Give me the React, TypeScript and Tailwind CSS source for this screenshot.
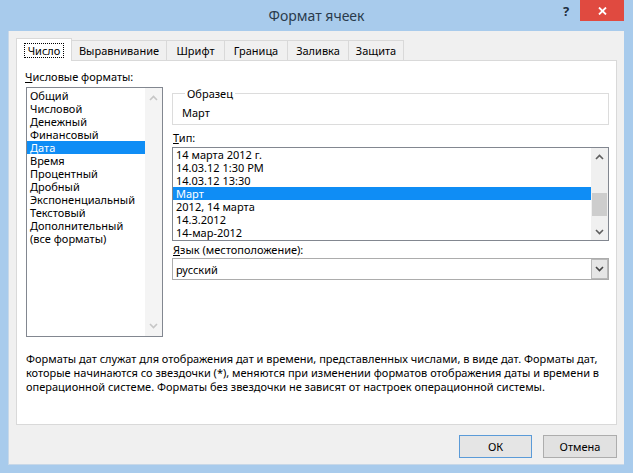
import React from "react";

const ChevUp = ({ c = "#5f5f5f" }: { c?: string }) => (
  <svg width="9" height="6" viewBox="0 0 9 6">
    <path d="M1 5 L4.5 1.5 L8 5" fill="none" stroke={c} strokeWidth="1.6" />
  </svg>
);
const ChevDown = ({ c = "#5f5f5f" }: { c?: string }) => (
  <svg width="9" height="6" viewBox="0 0 9 6">
    <path d="M1 1 L4.5 4.5 L8 1" fill="none" stroke={c} strokeWidth="1.6" />
  </svg>
);

const formats = [
  "Общий",
  "Числовой",
  "Денежный",
  "Финансовый",
  "Дата",
  "Время",
  "Процентный",
  "Дробный",
  "Экспоненциальный",
  "Текстовый",
  "Дополнительный",
  "(все форматы)",
];

const types = [
  "14 марта 2012 г.",
  "14.03.12 1:30 PM",
  "14.03.12 13:30",
  "Март",
  "2012, 14 марта",
  "14.3.2012",
  "14-мар-2012",
];

const tabs = [
  { t: "Число", w: "w-[56px]" },
  { t: "Выравнивание", w: "w-[96px]" },
  { t: "Шрифт", w: "w-[59px]" },
  { t: "Граница", w: "w-[64px]" },
  { t: "Заливка", w: "w-[62px]" },
  { t: "Защита", w: "w-[56px]" },
];

export default function App() {
  return (
    <div className="w-[633px] h-[473px] bg-[#a8cbec] flex flex-col font-['Noto_Sans',sans-serif] text-[11px] text-black overflow-hidden">
      {/* title bar */}
      <div className="relative h-[31px] shrink-0 flex items-center justify-center">
        <span className="text-[14px] text-[#2a3b4c] leading-none mt-[1px]">Формат ячеек</span>
        <span className="absolute left-[563px] top-[5px] text-[13px] font-bold text-[#1f2f3f] leading-none">?</span>
        <div className="absolute left-[580px] top-0 w-[44px] h-[21px] bg-[#e04a40] flex items-center justify-center">
          <svg width="9" height="8" viewBox="0 0 9 8">
            <path d="M1 0.5 L8 7.5 M8 0.5 L1 7.5" stroke="#fff" strokeWidth="1.8" />
          </svg>
        </div>
      </div>

      {/* client */}
      <div className="ml-[8px] w-[616px] h-[434px] bg-[#f0f0f0] flex flex-col border-l border-b border-[#c8d8e8]">
        {/* tabs */}
        <div className="h-[29px] pl-[7px] flex items-end">
          {tabs.map((tb, i) =>
            i === 0 ? (
              <div
                key={tb.t}
                className={`${tb.w} h-[23px] -mb-px relative z-10 bg-white border border-b-0 border-[#d9d9d9] flex items-center justify-center`}
              >
                <span className="border border-dotted border-black px-[3px] leading-[13px]">{tb.t}</span>
              </div>
            ) : (
              <div
                key={tb.t}
                className={`${tb.w} h-[20px] -ml-px bg-[#f0f0f0] border border-b-0 border-[#d9d9d9] flex items-center justify-center leading-none`}
              >
                {tb.t}
              </div>
            )
          )}
        </div>

        {/* panel */}
        <div className="ml-[7px] w-[601px] h-[365px] bg-white border border-[#d9d9d9] pl-[9px] pt-[9px] flex flex-col">
          <div className="flex">
            {/* left column */}
            <div className="w-[137px] flex flex-col">
              <div className="h-[13px] leading-[13px] -ml-px">
                <span className="underline">Ч</span>исловые форматы:
              </div>
              <div className="mt-[4px] h-[250px] border border-[#828790] flex">
                <div className="w-[118px] flex flex-col pt-px">
                  {formats.map((f) => (
                    <div
                      key={f}
                      className={`h-[13px] leading-[13px] pl-[3px] whitespace-nowrap ${
                        f === "Дата" ? "bg-[#0f8df5] text-white" : ""
                      }`}
                    >
                      {f}
                    </div>
                  ))}
                </div>
                <div className="w-[17px] bg-[#f4f4f4] flex flex-col justify-between items-center py-[7px]">
                  <ChevUp c="#c6c6c6" />
                  <ChevDown c="#c6c6c6" />
                </div>
              </div>
            </div>

            {/* right column */}
            <div className="ml-[9px] mt-[17px] w-[437px] flex flex-col">
              <fieldset className="border border-[#dcdcdc] pl-[9px] pb-[4px] h-[38px]">
                <legend className="px-[2px] ml-[3px] leading-[13px]">Образец</legend>
                <div className="leading-[13px] mt-[6px]">Март</div>
              </fieldset>
              <div className="mt-[6px] h-[13px] leading-[13px] pl-px">
                <span className="underline">Т</span>ип:
              </div>
              <div className="mt-[3px] h-[94px] border border-[#828790] flex">
                <div className="w-[418px] flex flex-col">
                  {types.map((t) => (
                    <div
                      key={t}
                      className={`h-[13px] leading-[13px] pl-[3px] whitespace-nowrap ${
                        t === "Март" ? "bg-[#0f8df5] text-white" : ""
                      }`}
                    >
                      {t}
                    </div>
                  ))}
                </div>
                <div className="w-[17px] bg-[#f0f0f0] flex flex-col items-center">
                  <div className="h-[17px] flex items-center justify-center">
                    <ChevUp />
                  </div>
                  <div className="flex-1 w-full flex flex-col justify-center">
                    <div className="h-[23px] mt-[21px] mx-px bg-[#cdcdcd]" />
                  </div>
                  <div className="h-[17px] flex items-center justify-center">
                    <ChevDown />
                  </div>
                </div>
              </div>
              <div className="mt-[2px] h-[13px] leading-[13px] pl-px">
                <span className="underline">Я</span>зык (местоположение):
              </div>
              <div className="mt-[2px] h-[22px] border border-[#acacac] flex items-center justify-between">
                <span className="pl-[3px] leading-[13px]">русский</span>
                <div className="w-[17px] h-[20px] bg-[#e6e6e6] border border-[#b9b9b9] flex items-center justify-center">
                  <ChevDown c="#444" />
                </div>
              </div>
            </div>
          </div>

          <div className="mt-[15px] leading-[14px] whitespace-nowrap">
            Форматы дат служат для отображения дат и времени, представленных числами, в виде дат. Форматы дат,
            <br />
            которые начинаются со звездочки (*), меняются при изменении форматов отображения даты и времени в
            <br />
            операционной системе. Форматы без звездочки не зависят от настроек операционной системы.
          </div>
        </div>

        {/* buttons */}
        <div className="flex justify-end gap-[11px] pr-[7px] pt-[10px]">
          <button className="w-[73px] h-[23px] bg-[#e5e5e5] border border-[#5b9bd8] leading-none">ОК</button>
          <button className="w-[74px] h-[23px] bg-[#e1e1e1] border border-[#adadad] leading-none">Отмена</button>
        </div>
      </div>
    </div>
  );
}
